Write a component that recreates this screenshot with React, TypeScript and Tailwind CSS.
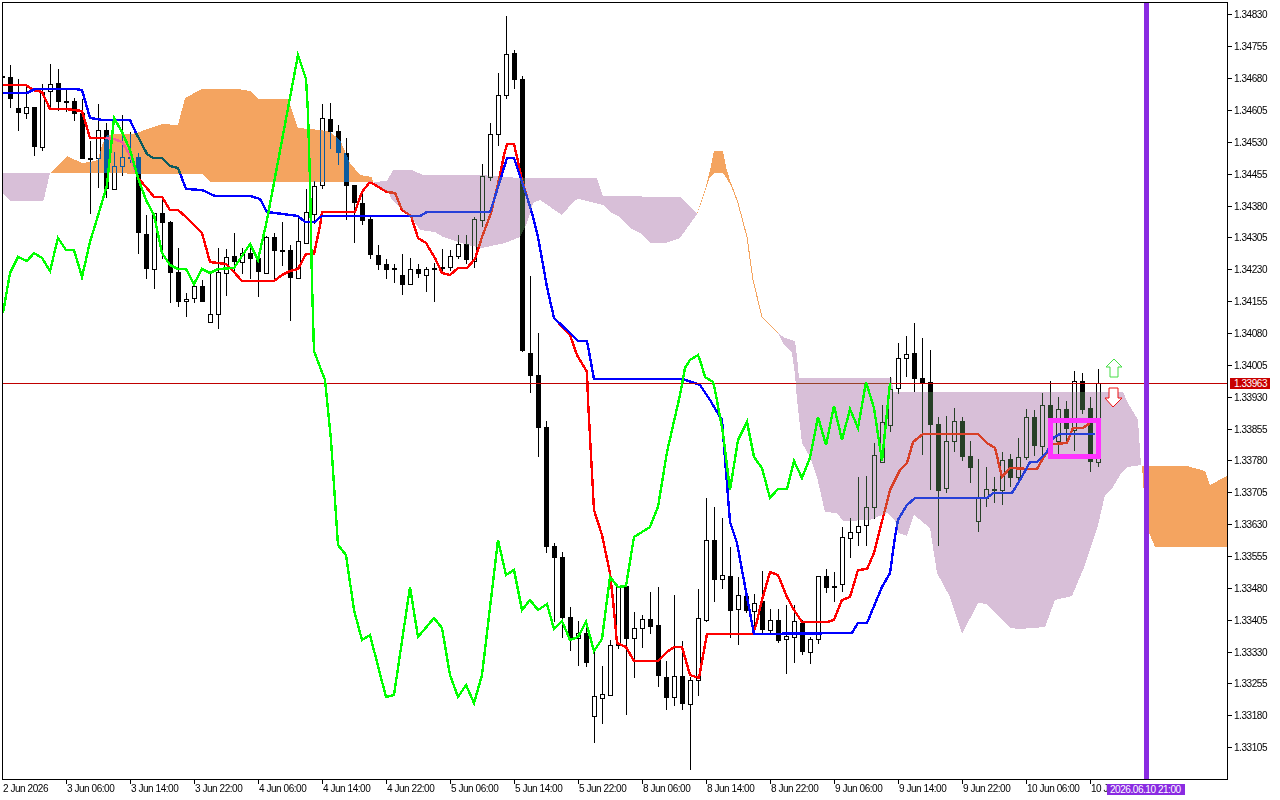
// [wick top, body top, body bottom, wick bottom, hollow]
type Candle = [number, number, number, number, number];

const candles: Candle[] = [
  [76, 76, 78, 78, 0], [65, 77, 99, 108, 0], [79, 108, 113, 131, 0], [87, 107, 113, 119, 1],
  [107, 107, 147, 156, 0], [84, 92, 147, 151, 1], [64, 84, 91, 110, 1], [69, 83, 102, 111, 0],
  [88, 101, 102, 112, 0], [98, 101, 114, 121, 0], [99, 113, 159, 159, 0], [141, 158, 159, 214, 0],
  [104, 130, 158, 188, 1], [123, 130, 189, 198, 0], [152, 166, 189, 190, 1], [115, 157, 166, 176, 1],
  [132, 157, 158, 163, 0], [153, 157, 233, 254, 0], [215, 234, 269, 279, 0], [213, 213, 269, 289, 1],
  [200, 213, 223, 259, 0], [221, 222, 273, 303, 0], [248, 272, 302, 307, 0], [293, 299, 301, 317, 1],
  [282, 286, 298, 303, 1], [280, 286, 302, 302, 0], [273, 314, 322, 323, 1], [248, 272, 314, 329, 1],
  [249, 257, 273, 296, 1], [233, 256, 262, 273, 0], [248, 253, 262, 274, 1], [244, 253, 259, 279, 0],
  [258, 258, 272, 297, 0], [236, 237, 273, 274, 1], [233, 237, 251, 280, 0], [222, 250, 251, 266, 0],
  [245, 250, 278, 321, 0], [217, 241, 278, 279, 1], [189, 212, 243, 244, 1], [181, 186, 214, 224, 1],
  [104, 118, 185, 189, 1], [103, 119, 132, 149, 0], [125, 131, 153, 165, 0], [138, 153, 186, 220, 0],
  [185, 185, 203, 243, 0], [193, 203, 221, 225, 0], [217, 219, 255, 259, 0], [245, 255, 265, 270, 0],
  [259, 264, 270, 279, 0], [264, 268, 269, 283, 0], [254, 275, 285, 295, 0], [258, 269, 284, 285, 1],
  [264, 269, 274, 278, 0], [267, 269, 275, 292, 1], [263, 268, 269, 302, 0], [249, 267, 268, 273, 0],
  [250, 256, 267, 271, 1], [235, 244, 256, 259, 1], [235, 244, 260, 264, 0], [217, 219, 261, 268, 1],
  [164, 176, 220, 227, 1], [123, 134, 177, 181, 1], [73, 95, 134, 146, 1], [16, 54, 95, 99, 1],
  [50, 53, 80, 89, 0], [76, 79, 351, 352, 0], [276, 353, 376, 393, 0], [333, 375, 428, 457, 0],
  [421, 427, 547, 553, 0], [543, 546, 558, 622, 0], [552, 557, 618, 638, 0], [607, 617, 639, 651, 0],
  [621, 633, 638, 666, 1], [622, 633, 663, 667, 0], [650, 696, 716, 743, 1], [666, 694, 698, 724, 1],
  [640, 645, 695, 695, 1], [586, 586, 645, 649, 1], [586, 586, 639, 715, 0], [612, 628, 638, 678, 1],
  [615, 619, 628, 648, 1], [592, 619, 627, 634, 0], [587, 625, 676, 687, 0], [661, 677, 698, 710, 0],
  [595, 676, 697, 706, 1], [641, 676, 704, 710, 0], [677, 680, 704, 770, 1], [589, 618, 680, 696, 1],
  [498, 540, 620, 622, 1], [507, 540, 580, 602, 0], [518, 575, 579, 589, 1], [547, 576, 611, 638, 0],
  [577, 595, 609, 645, 1], [596, 596, 611, 613, 0], [594, 603, 611, 633, 1], [571, 601, 630, 633, 0],
  [609, 620, 630, 633, 1], [609, 620, 641, 643, 0], [605, 636, 639, 674, 1], [605, 621, 637, 663, 1],
  [620, 623, 652, 655, 0], [637, 639, 652, 664, 1], [576, 576, 639, 644, 1], [569, 576, 588, 593, 0],
  [572, 586, 587, 602, 1], [527, 537, 584, 592, 1], [518, 532, 538, 558, 1], [477, 526, 532, 546, 1],
  [476, 507, 525, 546, 1], [443, 455, 507, 519, 1], [405, 422, 462, 453, 1], [377, 389, 425, 432, 1],
  [343, 358, 388, 394, 1], [336, 354, 358, 377, 1], [323, 353, 379, 392, 0], [338, 378, 383, 455, 0],
  [350, 382, 425, 490, 0], [417, 424, 491, 546, 0], [416, 441, 488, 493, 1], [408, 421, 441, 452, 1],
  [417, 421, 457, 461, 0], [441, 456, 468, 483, 0], [459, 498, 521, 532, 1], [467, 489, 498, 507, 1],
  [477, 489, 490, 503, 0], [452, 460, 490, 505, 1], [454, 459, 478, 487, 0], [438, 457, 477, 485, 1],
  [409, 417, 457, 460, 1], [410, 417, 446, 456, 0], [393, 405, 446, 456, 1], [381, 405, 428, 450, 0],
  [397, 409, 441, 455, 1], [401, 409, 429, 442, 0], [371, 381, 430, 451, 1], [373, 381, 410, 414, 0],
  [397, 408, 462, 472, 0], [369, 383, 462, 467, 1],
];

const redLine =
  "3,85 26,85 33,90 42,92 50,109 66,109 82,111 90,138 106,138 114,139 122,142 130,155 138,178 146,187 154,197 162,197 170,210 178,210 186,217 194,225 202,233 210,262 226,264 234,272 242,281 274,281 282,275 290,271 298,269 306,254 314,254 320,226 322,212 355,212 358,203 362,192 370,182 387,192 395,193 398,200 402,210 411,216 418,238 426,243 435,258 442,273 450,275 458,268 467,268 475,259 482,237 491,213 500,175 504,155 507,144 514,144 517,157 522,180 528,200 533,217 538,237 547,287 554,318 570,335 577,355 587,372 588,400 594,510 602,535 610,573 613,600 617,643 626,647 634,661 658,661 667,652 674,647 682,647 690,675 699,678 707,634 753,634 756,625 762,600 770,572 778,575 787,597 794,610 802,622 827,622 834,620 842,600 850,597 858,570 867,569 874,553 890,490 900,470 907,463 913,442 923,434 978,434 987,443 995,448 1002,477 1010,468 1030,469 1037,469 1045,455 1053,444 1067,443 1072,430 1073,428 1083,428 1090,423";

const blueLine =
  "3,93 27,93 35,89 75,89 82,90 90,118 103,120 130,120 136,133 147,154 153,158 162,158 170,166 178,168 186,189 202,190 215,196 250,196 260,199 267,212 283,214 298,216 305,222 315,222 320,217 323,216 420,216 427,212 490,212 494,200 507,158 514,158 528,200 533,217 538,237 547,287 554,318 570,333 578,341 587,341 594,379 683,379 700,385 710,400 722,420 728,497 730,522 737,543 747,597 754,634 852,633 858,623 867,623 882,587 890,573 895,537 898,520 907,505 915,498 987,498 993,493 1012,493 1020,480 1030,462 1037,462 1047,452 1053,438 1060,434 1095,434";

const greenLine =
  "3,313 10,273 18,257 27,261 34,253 42,258 50,271 58,238 66,250 74,250 82,277 90,242 103,199 107,185 114,118 122,132 130,150 138,178 146,200 154,215 162,253 170,265 178,269 186,269 194,284 202,269 210,273 218,269 234,268 250,244 258,260 267,220 298,55 306,79 308,113 310,182 312,283 313,317 314,351 320,367 325,380 331,440 338,545 346,555 354,610 362,640 370,635 386,697 394,695 410,587 418,637 434,618 442,628 450,675 458,697 466,685 474,703 482,675 498,540 506,575 514,570 522,610 530,600 538,610 547,604 554,629 562,621 570,640 578,637 586,622 594,651 602,639 607,600 610,577 618,587 626,586 634,537 650,527 658,507 667,452 680,395 685,368 690,360 698,355 700,360 705,377 713,382 715,390 723,433 730,490 738,440 747,422 754,457 762,468 770,498 778,489 787,489 794,461 802,478 810,458 818,417 826,445 834,406 842,440 850,409 858,428 866,382 874,408 882,461 890,383";

const purpleClouds = [
  "3,173 50,173 44,199 43,201 10,201 3,193",
  "373,182 387,181 393,170 412,170 423,175 480,175 520,178 597,178 603,196 680,197 697,214 680,238 665,243 650,243 640,233 630,228 620,217 610,212 603,205 583,200 578,199 575,200 562,215 540,200 533,203 527,223 520,237 505,243 482,248 467,245 443,237 435,232 420,230 413,220 402,210 392,200 389,193",
  "778,333 785,338 795,341 797,357 799,378 892,378 893,392 1123,392 1128,403 1138,420 1141,465 1128,467 1122,472 1113,487 1105,495 1098,525 1085,565 1072,596 1055,600 1045,627 1020,629 1010,628 987,604 978,603 962,634 950,597 937,573 930,528 914,515 907,536 898,533 895,520 887,513 870,520 843,521 837,513 825,512 817,477 810,457 802,443 797,400 795,375 792,353 783,343",
];

const orangeClouds = [
  "50,173 67,156 82,163 90,162 98,160 102,145 107,135 115,134 130,134 137,133 150,128 162,124 178,125 185,98 202,89 238,89 250,91 258,99 288,99 298,128 320,130 330,132 340,140 350,163 360,175 372,177 373,182 210,182 203,174",
  "697,214 705,190 710,170 714,151 723,151 726,167 732,187 723,173 715,173 710,177 703,198",
  "1142,466 1187,466 1205,471 1210,485 1227,476 1227,547 1155,547 1148,530 1144,495",
];

const orangeStrand = "731,184 738,203 747,237 753,280 762,317 778,333";

const prices = [
  "1.34830", "1.34755", "1.34680", "1.34605", "1.34530", "1.34455", "1.34380", "1.34305",
  "1.34230", "1.34155", "1.34080", "1.34005", "1.33930", "1.33855", "1.33780", "1.33705",
  "1.33630", "1.33555", "1.33480", "1.33405", "1.33330", "1.33255", "1.33180", "1.33105",
];

const times = [
  "2 Jun 2026", "3 Jun 06:00", "3 Jun 14:00", "3 Jun 22:00", "4 Jun 06:00", "4 Jun 14:00",
  "4 Jun 22:00", "5 Jun 06:00", "5 Jun 14:00", "5 Jun 22:00", "8 Jun 06:00", "8 Jun 14:00",
  "8 Jun 22:00", "9 Jun 06:00", "9 Jun 14:00", "9 Jun 22:00", "10 Jun 06:00", "10 J",
];

function ChartDrawing() {
  return (
    <svg className="block w-[1224px] h-[776px]" viewBox="3 3 1224 776" shapeRendering="crispEdges">
      {candles.map(([wt, bt, bb, wb, hollow], k) => {
        const cx = 2 + 8 * k;
        return (
          <g key={k}>
            <rect x={cx} y={wt} width={1} height={wb - wt} fill="#000" />
            {hollow ? (
              <rect x={cx - 1.5} y={bt + 0.5} width={4} height={bb - bt} fill="#fff" stroke="#000" />
            ) : (
              <rect x={cx - 2} y={bt} width={5} height={Math.max(bb - bt, 2)} fill="#000" />
            )}
          </g>
        );
      })}
      <polyline points={redLine} fill="none" stroke="#ff0000" strokeWidth={2.4} />
      <polyline points={blueLine} fill="none" stroke="#0000ff" strokeWidth={2.4} />
      <rect x={3} y={383} width={1224} height={1} fill="#c00000" />
      {purpleClouds.map((p) => (
        <polygon key={p} points={p} fill="#274027" className="mix-blend-difference" />
      ))}
      {orangeClouds.map((p) => (
        <polygon key={p} points={p} fill="#0b5b9f" className="mix-blend-difference" />
      ))}
      <polyline points={orangeStrand} fill="none" stroke="#f4a460" strokeWidth={1} />
      <polyline points={greenLine} fill="none" stroke="#00ff00" strokeWidth={2.4} />
      <rect x={1144} y={3} width={5} height={776} fill="#8a2be2" />
      <rect x={1050.5} y={420.5} width={48} height={36} fill="none" stroke="#ff33ff" strokeWidth={5} />
      <polygon points="1114,359 1122,367 1118,367 1118,377 1110,377 1110,367 1106,367" fill="#fff" stroke="#44dd44" shapeRendering="auto" />
      <polygon points="1109,388 1118,388 1118,398 1122,398 1113,407 1105,398 1109,398" fill="#fff" stroke="#ee1111" shapeRendering="auto" />
    </svg>
  );
}

export default function App() {
  return (
    <div className="relative w-[1280px] h-[800px] overflow-hidden bg-white text-black font-['Liberation_Sans',Arial,sans-serif] text-[10px] leading-none tracking-[-0.45px]">
      <div className="flex h-[780px]">
        <div className="w-[1228px] pl-[2px] pt-[2px]">
          <div className="h-[778px] border border-black">
            <ChartDrawing />
          </div>
        </div>
        <div className="flex flex-col -mt-px">
          {prices.map((p) => (
            <div key={p} className="flex items-center h-[31.87px] gap-[2px]">
              <span className="w-[4px] h-px bg-black" />
              <span className="pt-px">{p}</span>
            </div>
          ))}
        </div>
      </div>
      <div className="flex pl-[2px]">
        {times.map((t, i) => (
          <div key={t} className="relative w-[64px] shrink-0 h-[20px]">
            {i > 0 && <span className="absolute left-0 top-0 w-px h-[4px] bg-black" />}
            <span className="absolute left-px top-[4px] whitespace-nowrap">{t}</span>
          </div>
        ))}
      </div>
      <div className="absolute left-[1230px] top-[378px] w-[40px] h-[11px] pl-[4px] flex items-center bg-[#c80000] text-white">
        1.33963
      </div>
      <div className="absolute left-[1107px] top-[784px] w-[78px] h-[11px] pl-[3px] flex items-center bg-[#8a2be2] text-white">
        2026.06.10 21:00
      </div>
    </div>
  );
}
